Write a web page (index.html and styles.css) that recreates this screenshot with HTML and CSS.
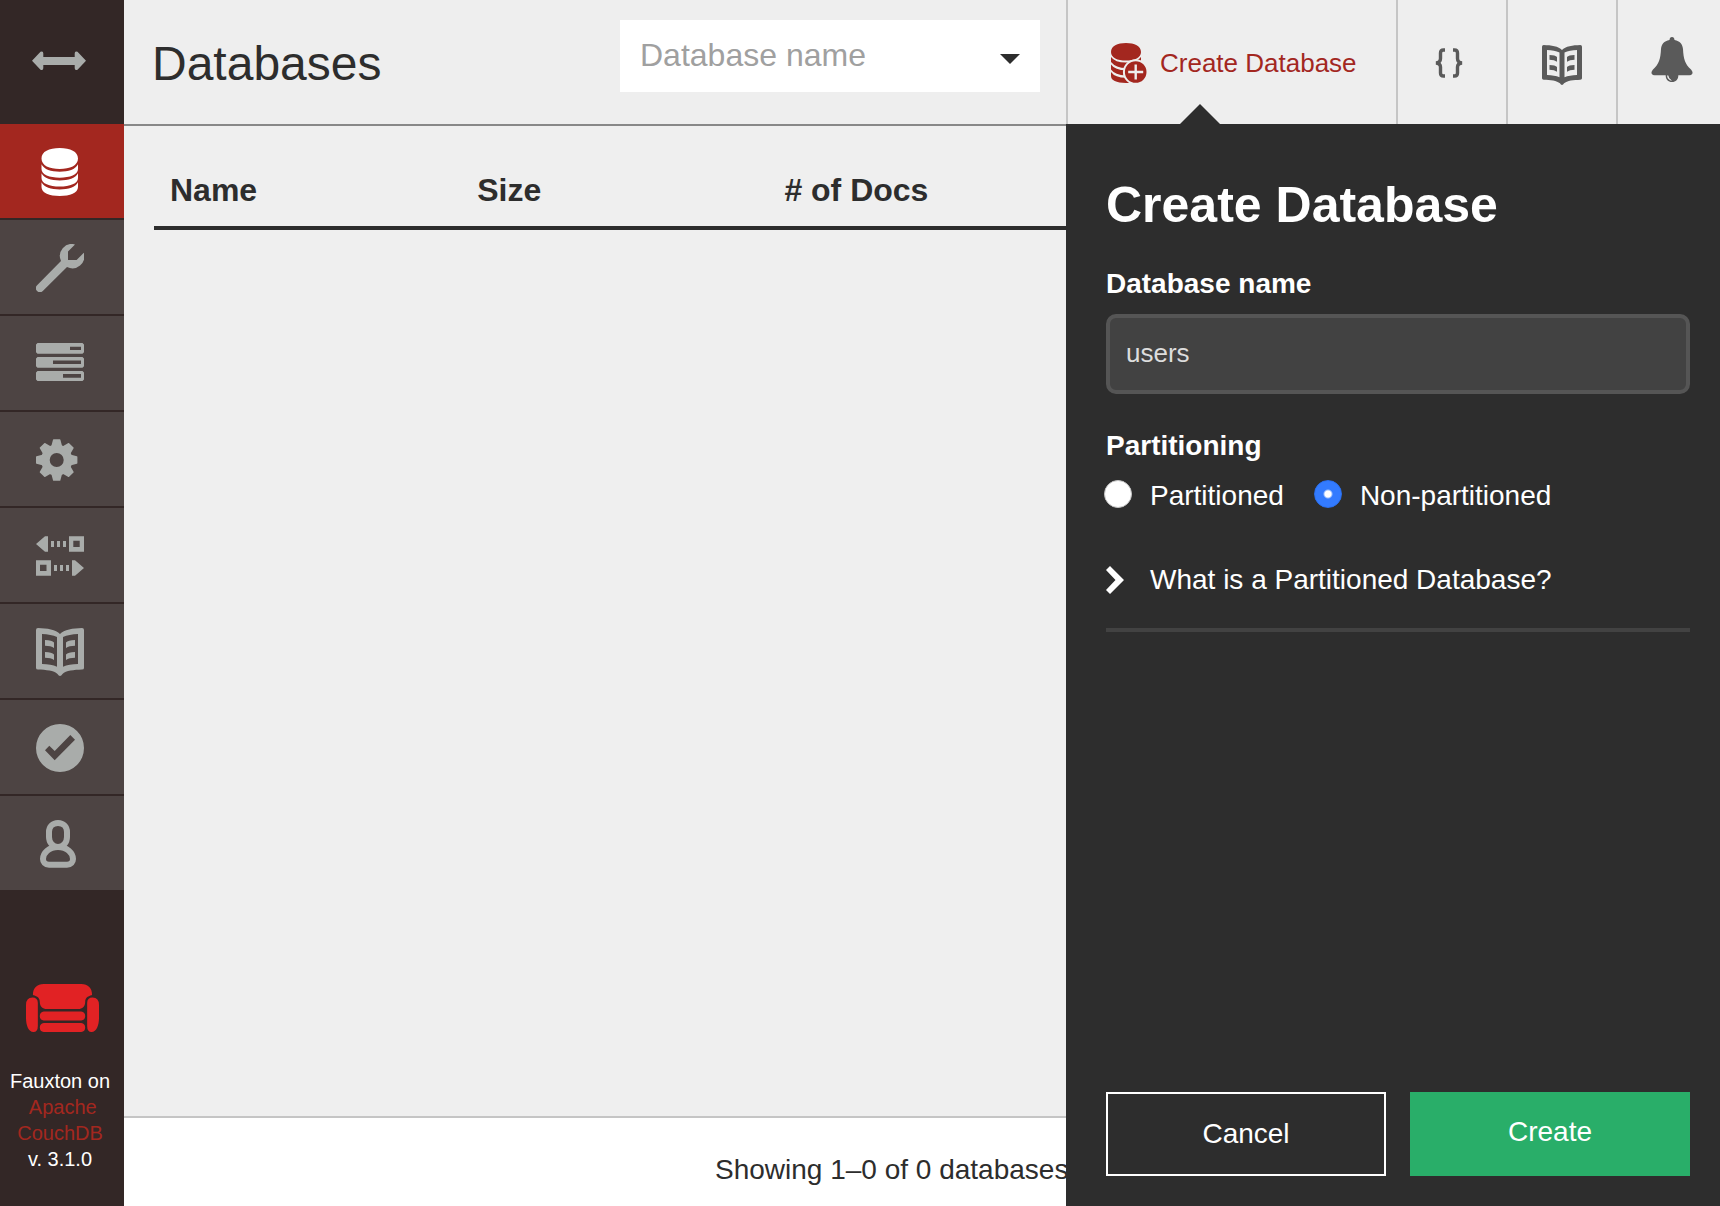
FILE: index.html
```html
<!DOCTYPE html>
<html lang="en">
<head>
<meta charset="utf-8">
<meta name="viewport" content="width=device-width, initial-scale=1">
<title>Databases</title>
<link rel="stylesheet" href="styles.css">
</head>
<body>
<svg class="symbols" aria-hidden="true">
  <symbol id="book" viewBox="0 0 48 48">
    <path fill-rule="evenodd" d="M2 0C11 .3 20 1.500 24 6C28 1.500 37 .3 46 0Q48 0 48 2V40Q48 41.500 46 41.600C38 42 30 42.500 26.500 46Q24 50 21.500 46C18 42.500 10 42 2 41.600Q0 41.500 0 40V2Q0 0 2 0ZM6 6V36C12 36.300 17 37 21 38.700V9C17 7.300 12 6.300 6 6ZM42 6V36C36 36.300 31 37 27 38.700V9C31 7.300 36 6.300 42 6Z"/>
    <path d="M9 12Q16 12 18 14.500V20Q15 17.700 9 17.700ZM9 24Q16 24 18 26.500V32Q15 29.700 9 29.700ZM39 12Q32 12 30 14.500V20Q33 17.700 39 17.700ZM39 24Q32 24 30 26.500V32Q33 29.700 39 29.700Z"/>
  </symbol>
</svg>

<div class="app">
  <aside class="sidebar">
    <button class="toggle" type="button" aria-label="Toggle menu">
      <svg width="54" height="20" viewBox="0 0 54 20"><path d="M0 9.700L8.500 .8Q11.300 -.5 11.300 2.500V6H42.700V2.500Q42.700 -.5 45.500 .8L54 9.700L45.500 18.700Q42.700 20 42.700 17V14H11.300V17Q11.300 20 8.500 18.700Z"/></svg>
    </button>
    <nav class="nav" aria-label="Main">
      <a class="nav-item active" href="#databases" aria-label="Databases">
        <svg viewBox="0 0 48 48"><path d="M5.500 10.500C5.500 3.500 13 0 23.700 0S42 3.500 42 10.500S34 21 23.700 21S5.500 17.500 5.500 10.500ZM5.500 16.300C8 21.500 15 23.700 23.700 23.700S39.500 21.500 42 16.300V21C42 26.500 34 29.700 23.700 29.700S5.500 26.500 5.500 21ZM5.500 25.300C8 30.300 15 32.500 23.700 32.500S39.500 30.300 42 25.300V30C42 35.500 34 38.600 23.700 38.600S5.500 35.500 5.500 30ZM5.500 34.200C8 39.300 15 41.400 23.700 41.400S39.500 39.300 42 34.200V39C42 45 34 48 23.700 48S5.500 45 5.500 39Z"/></svg>
      </a>
      <a class="nav-item" href="#setup" aria-label="Setup">
        <svg viewBox="0 0 48 48"><path d="M39 .4L32 7.400V16H40.600L47.800 8.800A12 12 0 0 1 31 23L6.800 47A4 4 0 0 1 1.100 41.200L25 17A12 12 0 0 1 39 .4Z"/></svg>
      </a>
      <a class="nav-item" href="#activetasks" aria-label="Active Tasks">
        <svg viewBox="0 0 48 48"><path fill-rule="evenodd" d="M1.500 3H46.500L48 4.500V12.200L46.500 13.700H1.500L0 12.200V4.500ZM34 6.700V10H45V6.700ZM1.500 17H46.500L48 18.500V26.200L46.500 27.700H1.500L0 26.200V18.500ZM17 20.500V24H45V20.500ZM1.500 31H46.500L48 32.500V39.500L46.500 41H1.500L0 39.500V32.500ZM27 34V37.700H45V34Z"/></svg>
      </a>
      <a class="nav-item" href="#config" aria-label="Configuration">
        <svg viewBox="0 0 48 48">
          <circle class="gear-ring" cx="20.700" cy="24" r="11.300"/>
          <path id="tooth" d="M15.200 10.500L17 3.800Q17.100 3.300 17.600 3.300H23.800Q24.300 3.300 24.400 3.800L26.200 10.500ZM15.200 37.500L17 44.200Q17.100 44.700 17.600 44.700H23.800Q24.300 44.700 24.400 44.200L26.200 37.500Z"/>
          <use href="#tooth" transform="rotate(45 20.700 24)"/>
          <use href="#tooth" transform="rotate(90 20.700 24)"/>
          <use href="#tooth" transform="rotate(135 20.700 24)"/>
        </svg>
      </a>
      <a class="nav-item" href="#replication" aria-label="Replication">
        <svg viewBox="0 0 48 48"><path fill-rule="evenodd" d="M0 12L9 4.300H12V19.700H9ZM15 9H18V15H15ZM21 9H24V15H21ZM27 9H30V15H27ZM33 4.300H48V19.700H33ZM37.300 8.700V15H43.700V8.700ZM0 28.300H15V43.700H0ZM4 32.700V39H10.500V32.700ZM18 33H21V39H18ZM24 33H27V39H24ZM30 33H33V39H30ZM36 28.300H39L48 36L39 43.700H36Z"/></svg>
      </a>
      <a class="nav-item" href="#documentation" aria-label="Documentation">
        <svg><use href="#book"/></svg>
      </a>
      <a class="nav-item" href="#verify" aria-label="Verify">
        <svg viewBox="0 0 48 48"><path fill-rule="evenodd" d="M24 0A24 24 0 1 1 24 48A24 24 0 1 1 24 0ZM9 26.300L18.700 36.300L39 15.700L34.300 11L18.700 27L13.300 21.700Z"/></svg>
      </a>
      <a class="nav-item" href="#account" aria-label="Account">
        <svg class="outline" viewBox="0 0 48 48"><path d="M22 3C16.500 3 13 7 13 12V17C13 22 16.500 27 22 27S31 22 31 17V12C31 7 27.500 3 22 3ZM13 44.700H31C35 44.700 37 42 37 39C37 33 31 27 22 27S7 33 7 39C7 42 9 44.700 13 44.700Z"/></svg>
      </a>
    </nav>
    <div class="brand">
      <svg width="73" height="48" viewBox="0 0 74 48" preserveAspectRatio="none"><path d="M7 11C7 4 11 0 18 0H56C63 0 67 4 67 11C62 12.500 60 14 60 18C60 22.500 57 25 53 25H21C17 25 14 22.500 14 18C14 14 12 12.500 7 11ZM18 27.500H56Q60 28 60 32T56 36.500H18Q14 36 14 32T18 27.500ZM18 39H56Q60 39.500 60 43.500T56 48H18Q14 47.500 14 43.500T18 39ZM6.500 13.500Q12 13.500 12 19V42Q12 48 7.500 48C2.500 48 0 41 0 34V21Q0 13.500 6.500 13.500ZM67.500 13.500Q62 13.500 62 19V42Q62 48 66.500 48C71.500 48 74 41 74 34V21Q74 13.500 67.500 13.500Z"/></svg>
      <p class="version">Fauxton on<br><a href="#couchdb">&nbsp;Apache<br>CouchDB</a><br>v. 3.1.0</p>
    </div>
  </aside>

  <div class="page">
    <header class="header">
      <h1 class="title">Databases</h1>
      <form class="search">
        <input class="search-input" type="text" placeholder="Database name" aria-label="Database name">
        <button class="search-open" type="button" aria-label="Show databases">
          <svg width="20" height="10" viewBox="0 0 20 10"><path d="M0 0H20L10 10Z"/></svg>
        </button>
      </form>
      <div class="actions">
        <button class="action create" type="button">
          <svg width="36" height="40" viewBox="0 0 36 40">
            <path d="M0 9C0 3 6.500 0 15 0S30 3 30 9S23.500 17.500 15 17.500S0 15 0 9ZM0 14Q4 19.500 15 19.500T30 14V18Q25 25 15 25T0 19ZM0 21.500Q4 27.300 15 27.300V32.500Q4 32 0 26.500ZM0 29Q4 34.800 15 34.800L20 40H15Q0 39.500 0 33ZM15 27.300H20V32.500H15Z"/>
            <circle class="plus-ring" cx="24.700" cy="29" r="11.800"/>
            <path class="plus" d="M24.700 21.500V36.500M17.200 29H32.200"/>
          </svg>
          Create Database
        </button>
        <button class="action api" type="button" aria-label="API">
          <svg class="outline braces" width="28" height="30" viewBox="0 0 28 30"><path d="M10 2H8.500Q5.500 2 5.500 5V10.500Q5.500 14.500 1 15Q5.500 15.500 5.500 19V25Q5.500 28 8.500 28H10M18 2H19.500Q22.500 2 22.500 5V10.500Q22.500 14.500 27 15Q22.500 15.500 22.500 19V25Q22.500 28 19.500 28H18"/></svg>
        </button>
        <button class="action" type="button" aria-label="Documentation">
          <svg class="book" width="40" height="40"><use href="#book"/></svg>
        </button>
        <button class="action bell" type="button" aria-label="Notifications">
          <svg width="42" height="46" viewBox="0 0 42 46"><path fill-rule="evenodd" d="M21 0Q23.300 0 23.500 3C29 4 31.500 7 32 12C32.500 22 34 27 40 32.500Q42.500 35.500 41 37Q40.500 38.300 38.500 38.300H27.300C27.500 42 25 45 21 45S14.500 42 14.700 38.300H3.500Q1.500 38.300 1 37Q-.5 35.500 2 32.500C8 27 9.500 22 10 12C10.500 7 13 4 18.500 3Q18.700 0 21 0ZM16 38.500Q16.500 43 21 43.800Q17.500 41.500 17.300 38.500Z"/></svg>
        </button>
      </div>
    </header>

    <main class="content">
      <table class="databases">
        <thead>
          <tr><th scope="col">Name</th><th scope="col">Size</th><th scope="col"># of Docs</th><td></td><td></td></tr>
        </thead>
      </table>
    </main>

    <footer class="footer">Showing 1–0 of 0 databases.</footer>

    <form class="tray">
      <h2 class="tray-title">Create Database</h2>
      <label class="tray-label" for="db-name">Database name</label>
      <input class="tray-input" id="db-name" type="text" value="users">
      <fieldset class="partitioning">
        <legend class="tray-label">Partitioning</legend>
        <div class="choices">
          <label class="choice"><input type="radio" name="partitioned" value="yes">Partitioned</label>
          <label class="choice"><input type="radio" name="partitioned" value="no" checked>Non-partitioned</label>
        </div>
      </fieldset>
      <button class="help" type="button" aria-expanded="false">
        <svg width="18" height="28" viewBox="0 0 18 28"><path d="M4 0L18 14L4 28L0 24L9.500 14L0 4Z"/></svg>
        What is a Partitioned Database?
      </button>
      <div class="tray-buttons">
        <button class="button cancel" type="button">Cancel</button>
        <button class="button submit" type="submit">Create</button>
      </div>
    </form>
  </div>
</div>
</body>
</html>
```
FILE: styles.css
```css
* {
  box-sizing: border-box;
}

body {
  margin: 0;
  font-family: "Liberation Sans", Arial, Helvetica, sans-serif;
  font-size: 28px;
  line-height: 36px;
  color: #2d2d2d;
  background: #efefef;
}

button,
input {
  font: inherit;
  color: inherit;
}

button {
  padding: 0;
  border: 0;
  background: none;
  cursor: pointer;
}

svg {
  display: block;
  flex: none;
  fill: currentColor;
}

.symbols {
  position: absolute;
  width: 0;
  height: 0;
}

.outline {
  fill: none;
  stroke: currentColor;
  stroke-width: 6;
}

.app {
  display: flex;
  min-height: 100vh;
}

/* Sidebar */
.sidebar {
  display: flex;
  flex: none;
  flex-direction: column;
  width: 124px;
  color: #a9acaa;
  background: #332726;
}

.toggle {
  display: flex;
  align-items: center;
  height: 124px;
  padding: 0 0 2px 32px;
}

.nav-item {
  display: block;
  padding: 24px 36px 22px;
  border-bottom: 2px solid #332726;
  color: inherit;
  background: #4d4443;
}

.nav-item svg {
  width: 48px;
  height: 48px;
}

.nav-item.active {
  color: #fff;
  background: #a3271f;
}

.gear-ring {
  fill: none;
  stroke: currentColor;
  stroke-width: 8.6;
}

.brand {
  display: flex;
  flex-direction: column;
  align-items: center;
  gap: 36px;
  margin-top: auto;
  padding-bottom: 34px;
  color: #e12224;
}

.version {
  margin: 0;
  padding-right: 4px;
  font-size: 20px;
  line-height: 26px;
  text-align: center;
  color: #fff;
}

.version a {
  color: #a3271f;
  text-decoration: none;
}

/* Page */
.page {
  position: relative;
  display: flex;
  flex: 1;
  flex-direction: column;
  min-width: 0;
  overflow: hidden;
}

.header {
  display: flex;
  align-items: center;
  height: 126px;
  border-bottom: 2px solid #888;
  background: #eee;
}

.title {
  flex: 1;
  margin: 0;
  padding: 4px 0 0 28px;
  font-size: 48px;
  font-weight: 400;
  line-height: 60px;
}

.search {
  display: flex;
  align-self: flex-start;
  width: 420px;
  height: 72px;
  margin: 20px 26px 0 0;
  background: #fff;
}

.search-input {
  flex: 1;
  min-width: 0;
  padding: 0 0 2px 20px;
  border: 0;
  font-size: 32px;
  background: none;
}

.search-input::placeholder {
  color: #a0a0a0;
  opacity: 1;
}

.search-open {
  padding: 6px 20px 0;
}

.actions {
  display: flex;
  align-self: stretch;
  width: 654px;
  color: #5a5a5a;
}

.action {
  display: flex;
  flex: none;
  align-items: center;
  justify-content: center;
  width: 110px;
  padding-top: 2px;
  border-left: 2px solid #c5c5c5;
}

.create {
  justify-content: flex-start;
  gap: 13px;
  width: 330px;
  padding-left: 43px;
  font-size: 26px;
  color: #a3271f;
}

.plus-ring {
  stroke: #eee;
  stroke-width: 2;
}

.plus {
  stroke: #eee;
  stroke-width: 2.4;
}

.api {
  padding-right: 6px;
}

.braces {
  stroke-width: 3.4;
}

.book {
  margin-top: 4px;
}

.bell {
  padding-bottom: 6px;
}

.content {
  flex: 1;
  padding: 28px 30px;
}

.databases {
  width: 100%;
  table-layout: fixed;
  border-collapse: collapse;
}

.databases th,
.databases td {
  padding: 18px 16px;
  border-bottom: 4px solid #2d2d2d;
  font-size: 32px;
  text-align: left;
}

.footer {
  height: 90px;
  padding: 34px 0 0 591px;
  border-top: 2px solid #c5c5c5;
  white-space: nowrap;
  background: #fff;
}

.tray {
  position: absolute;
  top: 124px;
  right: 0;
  bottom: 0;
  display: flex;
  flex-direction: column;
  width: 654px;
  padding: 51px 30px 30px 40px;
  color: #fff;
  background: #2d2d2d;
}

.tray::before {
  content: "";
  position: absolute;
  top: -20px;
  left: 114px;
  border: solid transparent;
  border-width: 0 20px 20px;
  border-bottom-color: #2d2d2d;
}

.tray-title {
  margin: 0 0 31px;
  font-size: 50px;
  line-height: 60px;
}

.tray-label {
  padding: 0;
  font-weight: 700;
}

.tray-input {
  height: 80px;
  margin: 12px 0 34px;
  padding: 0 16px 2px;
  border: 4px solid #555;
  border-radius: 10px;
  font-size: 26px;
  color: #ddd;
  background: #424242;
}

.partitioning {
  margin: 0;
  padding: 0;
  border: 0;
}

.choices {
  display: flex;
  gap: 30px;
  margin: 14px 0 0 -2px;
}

.choice {
  display: flex;
  gap: 18px;
}

.choice input {
  appearance: none;
  width: 28px;
  height: 28px;
  margin: 2px 0 0;
  border: 1px solid #c4c4c4;
  border-radius: 50%;
  background: #fff;
}

.choice input:checked {
  border-color: #2a70f0;
  background: radial-gradient(circle, #fff 3px, #337bff 5px);
}

.help {
  display: flex;
  align-items: center;
  gap: 26px;
  margin-top: 48px;
  padding-bottom: 30px;
  border-bottom: 4px solid #424242;
}

.tray-buttons {
  display: grid;
  grid-template-columns: 1fr 1fr;
  gap: 24px;
  margin-top: auto;
}

.button {
  height: 84px;
}

.cancel {
  border: 2px solid #fff;
}

.submit {
  padding-bottom: 4px;
  background: #29ae69;
}
```
